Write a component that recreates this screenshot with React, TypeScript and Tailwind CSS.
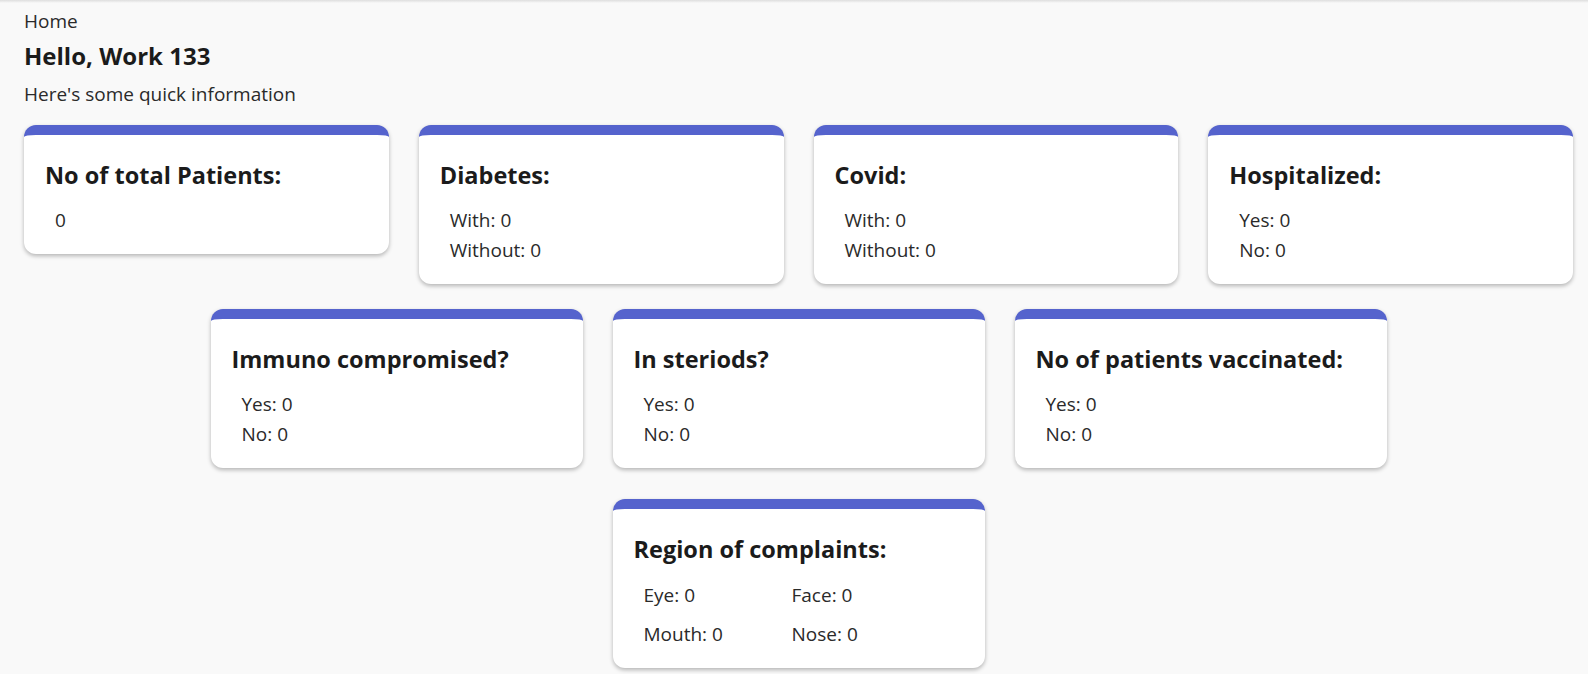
import type { ReactNode } from "react";

function StatCard({
  title,
  className,
  children,
}: {
  title: string;
  className?: string;
  children: ReactNode;
}) {
  return (
    <div
      className={`bg-white rounded-[12px] border-t-[10px] border-[#5563cd] shadow-[0_2px_4px_rgba(0,0,0,0.28)] px-[21px] pt-[24px] pb-[19px] ${className ?? ""}`}
    >
      <h2 className="text-[23.5px] leading-[32px] font-bold text-[#1b1b1b]">{title}</h2>
      <div className="mt-[14px] pl-[10px] text-[19px] leading-[30px] text-[#2a2a2a]">{children}</div>
    </div>
  );
}

export default function App() {
  return (
    <div className="min-h-screen bg-[#f9f9f9] font-['Open_Sans','Liberation_Sans',sans-serif]">
      <div className="h-[3px] bg-gradient-to-b from-[#dedede] to-[#f9f9f9]" />
      <div className="pl-6 pr-[15px] pt-[6px] pb-[6px]">
        <div className="text-[19px] leading-[24px] text-[#2a2a2a]">Home</div>
        <h1 className="mt-[8px] text-[24px] leading-[30px] font-bold text-[#1b1b1b]">Hello, Work 133</h1>
        <p className="mt-[11px] text-[19px] leading-[24px] text-[#2a2a2a]">Here's some quick information</p>

        <div className="mt-[19px] grid grid-cols-4 gap-x-[30px] items-start">
          <StatCard title="No of total Patients:">
            <div>0</div>
          </StatCard>
          <StatCard title="Diabetes:">
            <div>With: 0</div>
            <div>Without: 0</div>
          </StatCard>
          <StatCard title="Covid:">
            <div>With: 0</div>
            <div>Without: 0</div>
          </StatCard>
          <StatCard title="Hospitalized:">
            <div>Yes: 0</div>
            <div>No: 0</div>
          </StatCard>
        </div>

        <div className="mt-[25px] flex justify-center gap-x-[30px]">
          <StatCard title="Immuno compromised?" className="w-[372px]">
            <div>Yes: 0</div>
            <div>No: 0</div>
          </StatCard>
          <StatCard title="In steriods?" className="w-[372px]">
            <div>Yes: 0</div>
            <div>No: 0</div>
          </StatCard>
          <StatCard title="No of patients vaccinated:" className="w-[372px]">
            <div>Yes: 0</div>
            <div>No: 0</div>
          </StatCard>
        </div>

        <div className="mt-[31px] flex justify-center">
          <StatCard title="Region of complaints:" className="w-[372px]">
            <div className="grid grid-cols-[148px_148px] gap-y-[9px] pt-[1px]">
              <div>Eye: 0</div>
              <div>Face: 0</div>
              <div>Mouth: 0</div>
              <div>Nose: 0</div>
            </div>
          </StatCard>
        </div>
      </div>
    </div>
  );
}
